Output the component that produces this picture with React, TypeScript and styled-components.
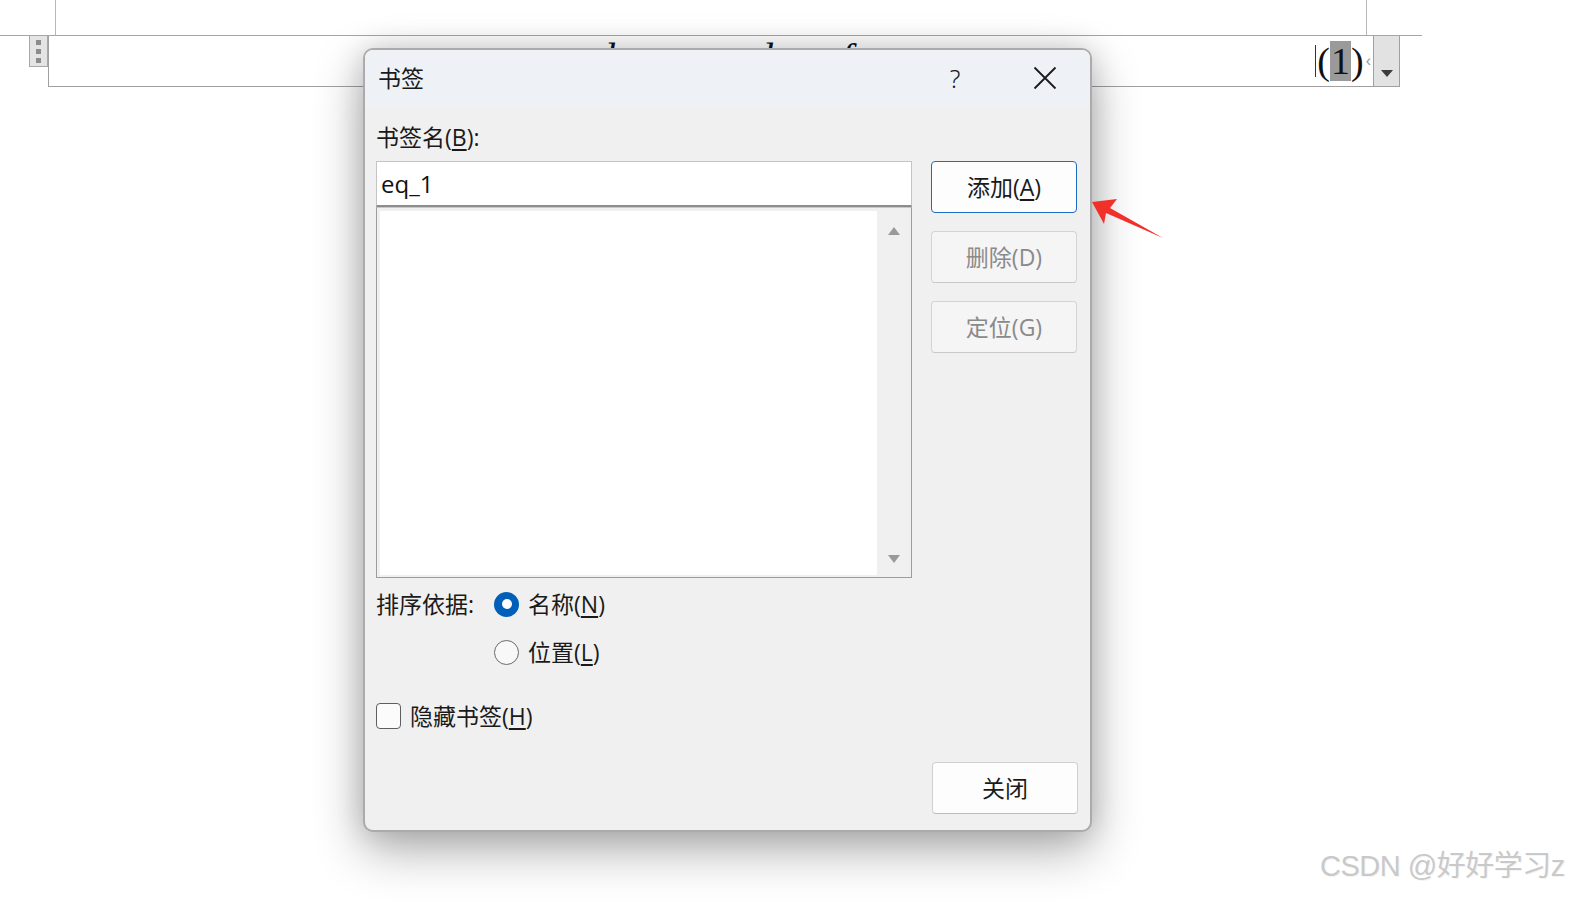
import React from 'react'
import styled, { createGlobalStyle } from 'styled-components'

const GlobalStyle = createGlobalStyle`
  html, body {
    margin: 0;
    padding: 0;
    background: #ffffff;
    overflow: hidden;
  }
  body {
    font-family: "Open Sans", "Noto Sans CJK SC", "Noto Sans", sans-serif;
    color: #1a1a1a;
  }
`

const Page = styled.div`
  position: relative;
  width: 1587px;
  height: 905px;
  overflow: hidden;
  background: #ffffff;
`

/* document behind the dialog */
const Doc = styled.div`
  width: 1422px;
`

const HeaderStrip = styled.div`
  box-sizing: border-box;
  height: 36px;
  padding-left: 55px;
  border-bottom: 1px solid #a6a6a6;
`

const HeaderColumn = styled.div`
  width: 1312px;
  height: 100%;
  box-sizing: border-box;
  border-left: 1px solid #b8b8b8;
  border-right: 1px solid #b8b8b8;
`

const EqRow = styled.div`
  display: flex;
  align-items: flex-start;
  padding-left: 29px;
`

const Handle = styled.div`
  box-sizing: border-box;
  width: 19px;
  height: 31px;
  background: #e4e4e4;
  border: 1px solid #a8a8a8;
  border-top: none;
  display: flex;
  flex-direction: column;
  align-items: center;
  justify-content: center;
  gap: 4px;
`

const HandleDot = styled.span`
  width: 5px;
  height: 5px;
  background: #8c8c8c;
`

const EqBox = styled.div`
  box-sizing: border-box;
  width: 1325px;
  height: 51px;
  border-left: 1px solid #a0a0a0;
  border-bottom: 1px solid #a0a0a0;
  display: flex;
  align-items: center;
  padding-right: 2px;
  overflow: hidden;
`

const Formula = styled.div`
  align-self: flex-start;
  display: flex;
  gap: 138px;
  margin: 2px auto 0 546px;
  font-family: "Liberation Serif", serif;
  font-style: italic;
  font-size: 40px;
  line-height: 40px;
  color: #111;
  & > span + span + span {
    margin-left: -70px;
  }
`

const EqNumber = styled.span`
  font-family: "Liberation Serif", serif;
  font-size: 38px;
  line-height: 40px;
  color: #111;
  display: flex;
  align-items: center;
`

const Caret = styled.span`
  width: 1px;
  height: 32px;
  background: #333;
  margin-right: 1px;
`

const Selected = styled.span`
  background: #9a9a9a;
  padding: 0 1px;
`

const Marker = styled.span`
  font-family: "Liberation Sans", sans-serif;
  font-size: 16px;
  color: #9a9a9a;
  margin-left: 2px;
`

const DropButton = styled.div`
  box-sizing: border-box;
  width: 27px;
  height: 51px;
  background: #e2e2e2;
  border: 1px solid #a0a0a0;
  border-top: none;
  display: flex;
  align-items: flex-end;
  justify-content: center;
  padding-bottom: 9px;
`

const DropArrow = styled.span`
  width: 0;
  height: 0;
  border-left: 6px solid transparent;
  border-right: 6px solid transparent;
  border-top: 7px solid #3c3c3c;
`

/* dialog */
const Dialog = styled.div`
  position: absolute;
  left: 363px;
  top: 48px;
  width: 729px;
  height: 784px;
  box-sizing: border-box;
  display: flex;
  flex-direction: column;
  background: #f0f0f0;
  border: 2px solid #ababab;
  border-radius: 10px;
  overflow: hidden;
  box-shadow: 0 18px 50px rgba(0, 0, 0, 0.32), 0 0 28px rgba(0, 0, 0, 0.14);
`

const TitleBar = styled.div`
  height: 56px;
  flex: none;
  display: flex;
  align-items: center;
  background: #eef2f7;
  padding-left: 13px;
`

const Title = styled.div`
  flex: 1;
  font-size: 23px;
  line-height: 30px;
`

const TitleButton = styled.div`
  width: 90px;
  height: 100%;
  display: flex;
  align-items: center;
  justify-content: center;
  font-family: "Noto Sans", sans-serif;
  font-size: 25px;
  font-weight: 300;
  color: #1a1a1a;
`

const Body = styled.div`
  flex: 1;
  display: flex;
  gap: 19px;
  padding: 15px 12px 0 11px;
`

const LeftCol = styled.div`
  width: 536px;
  display: flex;
  flex-direction: column;
`

const RightCol = styled.div`
  width: 146px;
  display: flex;
  flex-direction: column;
  gap: 18px;
  padding-top: 40px;
`

const Text = styled.span`
  font-size: 23px;
  line-height: 32px;
  color: #1a1a1a;
  white-space: nowrap;
`

const Key = styled.span`
  text-decoration: underline;
  text-underline-offset: 3px;
  text-decoration-thickness: 1.5px;
`

const FieldLabel = styled(Text)`
  display: block;
  margin-bottom: 8px;
`

const NameInput = styled.div`
  box-sizing: border-box;
  height: 46px;
  display: flex;
  align-items: center;
  padding-left: 4px;
  background: #ffffff;
  border: 1px solid #c4c4c4;
  border-bottom: 2px solid #8c8c8c;
  font-size: 24px;
  color: #111;
`

const ListBox = styled.div`
  box-sizing: border-box;
  height: 371px;
  display: flex;
  padding: 3px 1px 2px 3px;
  border: 1px solid #9c9c9c;
  border-top: 1px solid #c8c8c8;
  background: #f0f0f0;
`

const ListArea = styled.div`
  flex: 1;
  background: #ffffff;
`

const ScrollTrack = styled.div`
  width: 33px;
  display: flex;
  flex-direction: column;
  align-items: center;
  justify-content: space-between;
  padding: 16px 0 12px;
`

const ScrollArrow = styled.span<{ $down?: boolean }>`
  width: 0;
  height: 0;
  border-left: 6px solid transparent;
  border-right: 6px solid transparent;
  ${(p) =>
    p.$down ? 'border-top: 8px solid #9a9a9a;' : 'border-bottom: 8px solid #9a9a9a;'}
`

const SortRow = styled.div`
  display: flex;
  margin-top: 10px;
`

const SortLabel = styled(Text)`
  width: 118px;
`

const RadioGroup = styled.div`
  display: flex;
  flex-direction: column;
  gap: 16px;
`

const Option = styled.label`
  display: flex;
  align-items: center;
  gap: 9px;
  height: 32px;
`

const RadioDot = styled.span<{ $checked?: boolean }>`
  box-sizing: border-box;
  width: 25px;
  height: 25px;
  border-radius: 50%;
  display: flex;
  align-items: center;
  justify-content: center;
  background: ${(p) => (p.$checked ? '#005fb8' : '#f8f8f8')};
  border: ${(p) => (p.$checked ? 'none' : '1.5px solid #6b6b6b')};
  &::after {
    content: '';
    display: ${(p) => (p.$checked ? 'block' : 'none')};
    width: 10px;
    height: 10px;
    border-radius: 50%;
    background: #ffffff;
  }
`

const HideRow = styled(Option)`
  margin-top: 32px;
`

const CheckBox = styled.span`
  box-sizing: border-box;
  width: 25px;
  height: 26px;
  border-radius: 4px;
  border: 1.5px solid #5e5e5e;
  background: #fbfbfb;
`

const ActionButton = styled.div<{ $primary?: boolean; $disabled?: boolean }>`
  box-sizing: border-box;
  height: 52px;
  display: flex;
  align-items: center;
  justify-content: center;
  border-radius: 4px;
  font-size: 23px;
  line-height: 30px;
  background: ${(p) => (p.$disabled ? '#f5f5f5' : '#fdfdfd')};
  color: ${(p) => (p.$disabled ? '#8a8a8a' : '#1a1a1a')};
  border: 1px solid ${(p) => (p.$primary ? '#1b6dc1' : p.$disabled ? '#d4d4d4' : '#cfcfcf')};
  border-bottom-color: ${(p) => (p.$primary ? '#1b6dc1' : p.$disabled ? '#c8c8c8' : '#b4bcc6')};
`

const Footer = styled.div`
  display: flex;
  justify-content: flex-end;
  padding: 0 12px 16px;
`

const CloseAction = styled(ActionButton)`
  width: 146px;
`

/* overlays */
const Annotation = styled.svg`
  position: absolute;
  left: 1088px;
  top: 196px;
`

const Watermark = styled.div`
  position: absolute;
  left: 1320px;
  top: 848px;
  white-space: nowrap;
  font-family: "Liberation Sans", "Noto Sans CJK SC", sans-serif;
  font-size: 29px;
  line-height: 36px;
  color: #c9c9c9;
  text-shadow: 1px 1px 0 #f4f4f4;
  letter-spacing: -0.5px;
`

const CloseIcon = () => (
  <svg width="24" height="24" viewBox="0 0 24 24">
    <path d="M1.5 1.5 L22.5 22.5 M22.5 1.5 L1.5 22.5" stroke="#1a1a1a" strokeWidth="1.8" fill="none" />
  </svg>
)

const App = () => (
  <Page>
    <GlobalStyle />
    <Doc>
      <HeaderStrip>
        <HeaderColumn />
      </HeaderStrip>
      <EqRow>
        <Handle>
          <HandleDot />
          <HandleDot />
          <HandleDot />
        </Handle>
        <EqBox>
          <Formula>
            <span>d</span>
            <span>d</span>
            <span>f</span>
          </Formula>
          <EqNumber>
            <Caret />(<Selected>1</Selected>)
          </EqNumber>
          <Marker>‹</Marker>
        </EqBox>
        <DropButton>
          <DropArrow />
        </DropButton>
      </EqRow>
    </Doc>

    <Dialog>
      <TitleBar>
        <Title>书签</Title>
        <TitleButton>?</TitleButton>
        <TitleButton>
          <CloseIcon />
        </TitleButton>
      </TitleBar>
      <Body>
        <LeftCol>
          <FieldLabel>
            书签名(<Key>B</Key>):
          </FieldLabel>
          <NameInput>eq_1</NameInput>
          <ListBox>
            <ListArea />
            <ScrollTrack>
              <ScrollArrow />
              <ScrollArrow $down />
            </ScrollTrack>
          </ListBox>
          <SortRow>
            <SortLabel>排序依据:</SortLabel>
            <RadioGroup>
              <Option>
                <RadioDot $checked />
                <Text>
                  名称(<Key>N</Key>)
                </Text>
              </Option>
              <Option>
                <RadioDot />
                <Text>
                  位置(<Key>L</Key>)
                </Text>
              </Option>
            </RadioGroup>
          </SortRow>
          <HideRow>
            <CheckBox />
            <Text>
              隐藏书签(<Key>H</Key>)
            </Text>
          </HideRow>
        </LeftCol>
        <RightCol>
          <ActionButton $primary>
            添加(<Key>A</Key>)
          </ActionButton>
          <ActionButton $disabled>删除(D)</ActionButton>
          <ActionButton $disabled>定位(G)</ActionButton>
        </RightCol>
      </Body>
      <Footer>
        <CloseAction>关闭</CloseAction>
      </Footer>
    </Dialog>

    <Annotation width="80" height="48" viewBox="0 0 80 48">
      <polygon points="4,6 29,3 22,12 75,42 18,17 16,28" fill="#f2302a" />
    </Annotation>

    <Watermark>CSDN @好好学习z</Watermark>
  </Page>
)

export default App
